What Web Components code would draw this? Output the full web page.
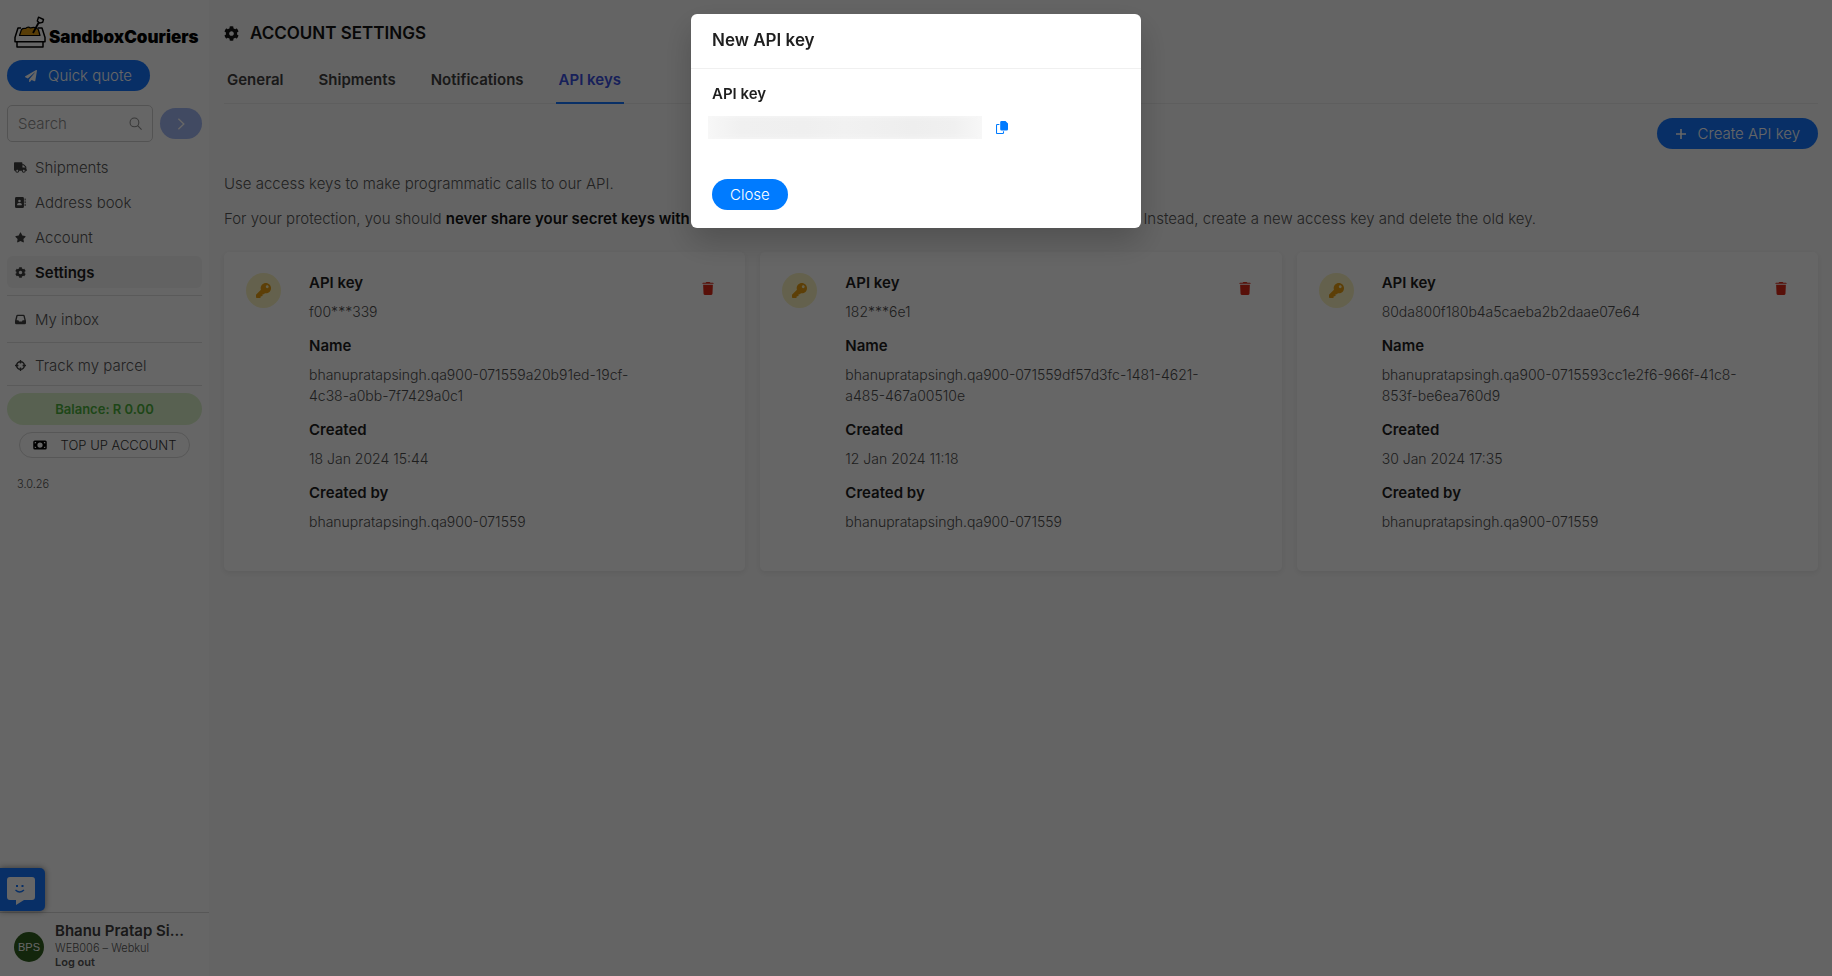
<!DOCTYPE html>
<html lang="en">
<head>
<meta charset="utf-8">
<meta name="viewport" content="width=device-width, initial-scale=1">
<title>Account settings</title>
<style>
  :root {
    --primary: #1677ff;
    --text: #555;
    --strong: #1f1f1f;
    --line: #e2e2e2;
  }
  body {
    margin: 0;
    background: #fafafa;
    color: var(--text);
    font: 300 15px/21px Inter, "Open Sans", sans-serif;
  }
  app-modal {
    --primary: #007bff;
  }
</style>
</head>
<body>
<app-shell>
  <side-bar slot="side"></side-bar>
  <account-settings></account-settings>
</app-shell>
<chat-launcher></chat-launcher>
<app-modal heading="New API key">
  <new-key></new-key>
  <app-button slot="footer">Close</app-button>
</app-modal>

<script>
const ICONS = {
  plane: ['0 0 512 512', '<path d="M476 3.2L12.5 270.6c-18.1 10.4-15.8 35.6 2.2 43.2L121 358.4l287.3-253.2c5.5-4.9 13.3 2.6 8.6 8.3L176 407v80.5c0 23.6 28.5 32.9 42.5 15.8L282 426l124.6 52.2c14.2 6 30.4-2.9 33-18.2l72-432C515 7.8 493.3-6.8 476 3.2z"/>'],
  search: ['0 0 16 16', '<g fill="none" stroke="currentColor" stroke-width="1.3"><circle cx="6.7" cy="6.7" r="5.4"/><path d="M10.6 10.6L15.5 15.5"/></g>'],
  right: ['0 0 16 16', '<path d="M5 2l6.2 6L5 14" fill="none" stroke="currentColor" stroke-width="1.6"/>'],
  truck: ['0 0 640 512', '<path d="M624 352h-16V243.9c0-12.7-5.1-24.9-14.1-33.9L494 110.1c-9-9-21.2-14.1-33.9-14.1H416V48c0-26.5-21.5-48-48-48H48C21.5 0 0 21.5 0 48v320c0 26.5 21.5 48 48 48h16c0 53 43 96 96 96s96-43 96-96h128c0 53 43 96 96 96s96-43 96-96h48c8.8 0 16-7.2 16-16v-32c0-8.8-7.2-16-16-16zM160 464c-26.5 0-48-21.5-48-48s21.5-48 48-48 48 21.5 48 48-21.5 48-48 48zm320 0c-26.5 0-48-21.5-48-48s21.5-48 48-48 48 21.5 48 48-21.5 48-48 48zm80-208H416V144h44.1l99.9 99.9V256z"/>'],
  book: ['0 0 512 512', '<path fill-rule="evenodd" d="M64 0h288a64 64 0 0 1 64 64v384a64 64 0 0 1-64 64H64a64 64 0 0 1-64-64V64A64 64 0 0 1 64 0zM208 128a60 60 0 1 0 0 120 60 60 0 1 0 0-120zM176 284a80 80 0 0 0-80 80c0 10 6 16 16 16h192c10 0 16-6 16-16a80 80 0 0 0-80-80z"/><path d="M448 64h32a16 16 0 0 1 16 16v64a16 16 0 0 1-16 16h-32zM448 192h32a16 16 0 0 1 16 16v64a16 16 0 0 1-16 16h-32zM448 320h32a16 16 0 0 1 16 16v64a16 16 0 0 1-16 16h-32z"/>'],
  star: ['0 0 576 512', '<path d="M259.3 17.8L194 150.2 47.9 171.5c-26.2 3.8-36.7 36.1-17.7 54.6l105.7 103-25 145.5c-4.5 26.3 23.2 46 46.4 33.7L288 439.6l130.7 68.7c23.2 12.2 50.9-7.4 46.4-33.7l-25-145.5 105.7-103c19-18.5 8.5-50.8-17.7-54.6L382 150.2 316.7 17.8c-11.7-23.6-45.6-23.9-57.4 0z"/>'],
  gear: ['0 0 512 512', '<path d="M487.4 315.7l-42.6-24.6c4.3-23.2 4.3-47 0-70.2l42.6-24.6c4.9-2.8 7.1-8.6 5.5-14-11.1-35.6-30-67.8-54.7-94.6-3.8-4.1-10-5.1-14.8-2.3L380.8 110c-17.9-15.4-38.5-27.3-60.8-35.1V25.8c0-5.6-3.9-10.5-9.4-11.7-36.7-8.2-74.3-7.8-109.2 0-5.5 1.2-9.4 6.1-9.4 11.7V75c-22.2 7.9-42.8 19.8-60.8 35.1L88.7 85.5c-4.9-2.8-11-1.9-14.8 2.3-24.7 26.7-43.6 58.9-54.7 94.6-1.7 5.4.6 11.2 5.5 14L67.3 221c-4.3 23.2-4.3 47 0 70.2l-42.6 24.6c-4.9 2.8-7.1 8.6-5.5 14 11.1 35.6 30 67.8 54.7 94.6 3.8 4.1 10 5.1 14.8 2.3l42.6-24.6c17.9 15.4 38.5 27.3 60.8 35.1v49.2c0 5.6 3.9 10.5 9.4 11.7 36.7 8.2 74.3 7.8 109.2 0 5.5-1.2 9.4-6.1 9.4-11.7v-49.2c22.2-7.9 42.8-19.8 60.8-35.1l42.6 24.6c4.9 2.8 11 1.9 14.8-2.3 24.7-26.7 43.6-58.9 54.7-94.6 1.5-5.5-.7-11.3-5.6-14.1zM256 336c-44.1 0-80-35.9-80-80s35.9-80 80-80 80 35.9 80 80-35.9 80-80 80z"/>'],
  inbox: ['0 0 512 512', '<path fill-rule="evenodd" d="M121 32h270a64 64 0 0 1 62 48l57 229q2 8 2 16v91a64 64 0 0 1-64 64H64a64 64 0 0 1-64-64v-91q0-8 2-16L59 80a64 64 0 0 1 62-48zm0 64L73 288h84l32 64h134l32-64h84L391 96z"/>'],
  target: ['0 0 16 16', '<circle cx="8" cy="8" r="5.6" fill="none" stroke="currentColor" stroke-width="2.2"/><path d="M7 0h2v5H7zM7 11h2v5H7zM0 7h5v2H0zM11 7h5v2h-5z"/>'],
  money: ['0 0 576 512', '<path fill-rule="evenodd" d="M64 64h448a64 64 0 0 1 64 64v256a64 64 0 0 1-64 64H64a64 64 0 0 1-64-64V128a64 64 0 0 1 64-64zM288 144a112 112 0 1 0 0 224 112 112 0 1 0 0-224zM64 128v64a64 64 0 0 0 64-64zM448 128a64 64 0 0 0 64 64v-64zM64 320v64h64a64 64 0 0 0-64-64zM512 320a64 64 0 0 0-64 64h64z"/>'],
  plus: ['0 0 12 12', '<path d="M5.2 1h1.6v4.2H11v1.6H6.8V11H5.2V6.8H1V5.2h4.2z"/>'],
  key: ['0 0 512 512', '<path d="M512 176.001C512 273.203 433.202 352 336 352c-11.22 0-22.19-1.062-32.827-3.069l-24.012 27.014A23.999 23.999 0 0 1 261.223 384H224v40c0 13.255-10.745 24-24 24h-40v40c0 13.255-10.745 24-24 24H24c-13.255 0-24-10.745-24-24v-78.059c0-6.365 2.529-12.47 7.029-16.971l161.802-161.802C163.108 213.814 160 195.271 160 176 160 78.798 238.797.001 335.999 0 433.488-.001 512 78.511 512 176.001zM336 128c0 26.51 21.49 48 48 48s48-21.49 48-48-21.49-48-48-48-48 21.49-48 48z"/>'],
  trash: ['0 0 448 512', '<path d="M135 18L128 32H32a32 32 0 0 0-32 32h448a32 32 0 0 0-32-32h-96l-7-14A32 32 0 0 0 284 0H164a32 32 0 0 0-29 18zM416 104H32l16 363a48 48 0 0 0 48 45h256a48 48 0 0 0 48-45z"/>'],
  copy: ['0 0 12 13', '<path d="M5.5 0h4L12 2.5v5.7a1.3 1.3 0 0 1-1.3 1.3H5.5a1.3 1.3 0 0 1-1.3-1.3V1.3A1.3 1.3 0 0 1 5.5 0z"/><path d="M3.4 3.5H1.3a.8.8 0 0 0-.8.8v7.4c0 .4.4.8.8.8h5.4c.4 0 .8-.4.8-.8v-1.4" fill="none" stroke="currentColor" stroke-width="1.1"/>']
};

class AppIcon extends HTMLElement {
  constructor() {
    super();
    this.attachShadow({ mode: 'open' });
  }

  connectedCallback() {
    const [box, shape] = ICONS[this.getAttribute('name')];
    this.shadowRoot.innerHTML = `
      <style>
        :host {
          display: inline-flex;
          flex: none;
          width: var(--icon-width, 12px);
          height: var(--icon-height, 12px);
        }
        svg {
          width: 100%;
          height: 100%;
          fill: currentColor;
        }
      </style>
      <svg viewBox="${box}" aria-hidden="true">${shape}</svg>
    `;
  }
}
customElements.define('app-icon', AppIcon);

class AppButton extends HTMLElement {
  constructor() {
    super();
    this.attachShadow({ mode: 'open' });
  }

  connectedCallback() {
    const icon = this.getAttribute('icon');
    this.shadowRoot.innerHTML = `
      <style>
        :host {
          display: inline-block;
        }
        button {
          display: flex;
          align-items: center;
          gap: 11px;
          height: 31px;
          padding: 0 18px;
          border: 0;
          border-radius: 16px;
          background: var(--primary);
          color: #fff;
          font: inherit;
          cursor: pointer;
        }
      </style>
      <button type="button">
        ${icon ? `<app-icon name="${icon}"></app-icon>` : ''}
        <slot></slot>
      </button>
    `;
  }
}
customElements.define('app-button', AppButton);

class AppShell extends HTMLElement {
  constructor() {
    super();
    this.attachShadow({ mode: 'open' });
  }

  connectedCallback() {
    this.shadowRoot.innerHTML = `
      <style>
        :host {
          display: grid;
          grid-template-columns: 209px 1fr;
          min-height: 100vh;
        }
        main {
          min-width: 0;
          padding: 21px 14px 14px 15px;
        }
      </style>
      <slot name="side"></slot>
      <main><slot></slot></main>
    `;
  }
}
customElements.define('app-shell', AppShell);

class BrandLogo extends HTMLElement {
  constructor() {
    super();
    this.attachShadow({ mode: 'open' });
  }

  connectedCallback() {
    this.shadowRoot.innerHTML = `
      <style>
        :host {
          display: flex;
          align-items: flex-end;
          gap: 3px;
          padding-left: 7px;
          color: #000;
          font-size: 17px;
          font-weight: 900;
          line-height: 22px;
        }
        svg {
          flex: none;
          width: 32px;
          height: 32px;
        }
      </style>
      <svg viewBox="0 0 32 32" fill="none" stroke="#000" stroke-width="1.5" stroke-linejoin="round" aria-hidden="true">
        <path d="M5.5 19.5l2-6q1.500-1.500 4-1 2.500-2.500 5-.5 4-1.500 5.500.5 2 0 2.500 1.500l1.500 5.500z" fill="#dc9a12" stroke-width="1.2"/>
        <path d="M7 12H4L1 21.500v4.200h30v-4.200L28 12h-4.500M3 25.700V31h26v-5.300"/>
        <path d="M19 17l6-11" stroke-width="1.8"/>
        <path d="M24.500 1.200l5 2.300-.8 2.800-3.200.8-2.200-2.100z" stroke-width="1.4"/>
      </svg>
      <span>SandboxCouriers</span>
    `;
  }
}
customElements.define('brand-logo', BrandLogo);

class NavItem extends HTMLElement {
  constructor() {
    super();
    this.attachShadow({ mode: 'open' });
  }

  connectedCallback() {
    this.shadowRoot.innerHTML = `
      <style>
        :host {
          display: block;
        }
        a {
          display: flex;
          align-items: center;
          gap: 8px;
          height: 32px;
          padding: 0 7px;
          border-radius: 6px;
          color: inherit;
          text-decoration: none;
        }
        :host([active]) a {
          background: #f5f5f5;
          color: var(--strong);
          font-weight: 600;
        }
        .icon {
          display: flex;
          justify-content: center;
          width: 13px;
          color: #404040;
        }
        app-icon {
          --icon-width: ${this.getAttribute('icon') === 'truck' ? 13 : 11}px;
          --icon-height: 11px;
        }
      </style>
      <a href="#"><span class="icon"><app-icon name="${this.getAttribute('icon')}"></app-icon></span><slot></slot></a>
    `;
  }
}
customElements.define('nav-item', NavItem);

class SideBar extends HTMLElement {
  constructor() {
    super();
    this.attachShadow({ mode: 'open' });
  }

  connectedCallback() {
    this.shadowRoot.innerHTML = `
      <style>
        * {
          box-sizing: border-box;
        }
        :host {
          display: flex;
          flex-direction: column;
          position: sticky;
          top: 0;
          height: 100vh;
          background: #fff;
        }
        .top {
          flex: 1;
          padding: 16px 7px 0;
        }
        .quote {
          margin-top: 12px;
        }
        .search {
          display: flex;
          align-items: center;
          gap: 7px;
          margin: 14px 0 9px;
        }
        .field {
          display: flex;
          align-items: center;
          flex: 1;
          min-width: 0;
          height: 37px;
          padding: 0 10px;
          border: 1px solid #d0d0d0;
          border-radius: 5px;
          color: #8c8c8c;
          --icon-width: 13px;
          --icon-height: 13px;
        }
        input {
          flex: 1;
          min-width: 0;
          padding: 0;
          border: 0;
          outline: 0;
          background: none;
          font: inherit;
        }
        input::placeholder {
          color: #8c8c8c;
          opacity: 1;
        }
        .go {
          display: flex;
          align-items: center;
          justify-content: center;
          width: 42px;
          height: 31px;
          padding: 0;
          border: 0;
          border-radius: 16px;
          background: #a3b8f5;
          color: #fff;
          --icon-width: 14px;
          --icon-height: 14px;
        }
        nav {
          display: grid;
          gap: 3px;
          padding-bottom: 7px;
        }
        nav + nav {
          padding-top: 7px;
          border-top: 1px solid var(--line);
        }
        nav.last {
          padding: 6px 0 4px;
          border-bottom: 1px solid var(--line);
        }
        .balance {
          margin-top: 7px;
          border-radius: 16px;
          background: #ddf3cb;
          color: #4cb03c;
          font-size: 13px;
          font-weight: 600;
          line-height: 32px;
          text-align: center;
        }
        .topup {
          display: flex;
          align-items: center;
          justify-content: center;
          gap: 14px;
          width: 171px;
          height: 26px;
          margin: 7px auto 0;
          padding: 0;
          border: 1px solid #d9d9d9;
          border-radius: 13px;
          background: none;
          color: #333;
          font: inherit;
          font-size: 13px;
          --icon-width: 14px;
        }
        .topup app-icon {
          color: #000;
        }
        .version {
          margin: 16px 10px;
          font-size: 11px;
        }
        .user {
          display: flex;
          align-items: center;
          gap: 11px;
          height: 64px;
          padding: 0 14px;
          border-top: 1px solid #d9d9d9;
        }
        .avatar {
          display: grid;
          place-items: center;
          flex: none;
          width: 30px;
          height: 30px;
          margin-top: 4px;
          border-radius: 50%;
          background: #315f1f;
          color: #fff;
          font: 11px/30px "Liberation Sans", sans-serif;
        }
        .who {
          display: grid;
          min-width: 0;
          font-size: 11px;
          line-height: 14px;
        }
        .who strong {
          overflow: hidden;
          color: #404040;
          font-size: 15px;
          font-weight: 600;
          line-height: 20px;
          text-overflow: ellipsis;
          white-space: nowrap;
        }
        .who a {
          color: inherit;
          font-weight: 600;
          text-decoration: none;
        }
      </style>
      <div class="top">
        <brand-logo></brand-logo>
        <app-button class="quote" icon="plane">Quick quote</app-button>
        <form class="search">
          <label class="field"><input type="text" placeholder="Search" aria-label="Search"><app-icon name="search"></app-icon></label>
          <button class="go" type="button" aria-label="Go"><app-icon name="right"></app-icon></button>
        </form>
        <nav>
          <nav-item icon="truck">Shipments</nav-item>
          <nav-item icon="book">Address book</nav-item>
          <nav-item icon="star">Account</nav-item>
          <nav-item icon="gear" active>Settings</nav-item>
        </nav>
        <nav><nav-item icon="inbox">My inbox</nav-item></nav>
        <nav class="last"><nav-item icon="target">Track my parcel</nav-item></nav>
        <div class="balance">Balance: R 0.00</div>
        <button class="topup" type="button"><app-icon name="money"></app-icon>TOP UP ACCOUNT</button>
        <div class="version">3.0.26</div>
      </div>
      <div class="user">
        <span class="avatar">BPS</span>
        <div class="who">
          <strong>Bhanu Pratap Si...</strong>
          <span>WEB006 – Webkul</span>
          <a href="#">Log out</a>
        </div>
      </div>
    `;
  }
}
customElements.define('side-bar', SideBar);

class KeyCard extends HTMLElement {
  constructor() {
    super();
    this.attachShadow({ mode: 'open' });
  }

  connectedCallback() {
    const get = (name) => this.getAttribute(name);
    this.shadowRoot.innerHTML = `
      <style>
        :host {
          display: grid;
          grid-template-columns: 35px minmax(0, 1fr) 12px;
          padding: 20px 31px 39px 22px;
          border-radius: 5px;
          background: #fff;
          box-shadow: 0 2px 6px rgba(0, 0, 0, 0.08);
          line-height: 21px;
        }
        .badge {
          display: grid;
          place-items: center;
          width: 35px;
          height: 35px;
          margin-top: 1px;
          border-radius: 50%;
          background: #faf3c0;
          color: #e89f12;
          --icon-width: 15px;
          --icon-height: 15px;
        }
        dl {
          display: grid;
          align-content: start;
          gap: 13px;
          margin: 0 20px 0 28px;
        }
        dt {
          margin-bottom: 8px;
          color: var(--strong);
          font-weight: 600;
        }
        dd {
          margin: 0;
          color: #4d4d4d;
          font-size: 14px;
          white-space: pre-line;
        }
        button {
          align-self: start;
          display: flex;
          margin-top: 10px;
          padding: 0;
          border: 0;
          background: none;
          color: #dc2a18;
          --icon-height: 13px;
        }
      </style>
      <span class="badge"><app-icon name="key"></app-icon></span>
      <dl>
        <div><dt>API key</dt><dd>${get('key')}</dd></div>
        <div><dt>Name</dt><dd>${get('name')}</dd></div>
        <div><dt>Created</dt><dd>${get('created')}</dd></div>
        <div><dt>Created by</dt><dd>${get('by')}</dd></div>
      </dl>
      <button type="button" aria-label="Delete"><app-icon name="trash"></app-icon></button>
    `;
  }
}
customElements.define('key-card', KeyCard);

class AccountSettings extends HTMLElement {
  constructor() {
    super();
    this.attachShadow({ mode: 'open' });
  }

  connectedCallback() {
    this.shadowRoot.innerHTML = `
      <style>
        :host {
          display: block;
        }
        h1 {
          display: flex;
          align-items: center;
          gap: 11px;
          margin: 0;
          color: #141414;
          font-size: 17px;
          font-weight: 600;
          line-height: 24px;
          --icon-width: 15px;
          --icon-height: 15px;
        }
        nav {
          display: flex;
          gap: 29px;
          margin-top: 24px;
          border-bottom: 1px solid #ebebeb;
        }
        nav a {
          margin-bottom: -1px;
          padding: 0 3px 12px;
          border-bottom: 2px solid transparent;
          color: #404040;
          font-weight: 600;
          text-decoration: none;
        }
        nav a[aria-current] {
          border-color: var(--primary);
          color: #3b50e0;
        }
        .actions {
          display: flex;
          justify-content: flex-end;
          margin: 14px 0 24px;
        }
        p {
          margin: 0 0 14px;
        }
        b {
          color: #141414;
          font-weight: 600;
        }
        .cards {
          display: grid;
          grid-template-columns: repeat(3, minmax(0, 1fr));
          gap: 15px;
          margin-top: 23px;
        }
      </style>
      <h1><app-icon name="gear"></app-icon>ACCOUNT SETTINGS</h1>
      <nav>
        <a href="#">General</a>
        <a href="#">Shipments</a>
        <a href="#">Notifications</a>
        <a href="#" aria-current="page">API keys</a>
      </nav>
      <div class="actions"><app-button icon="plus">Create API key</app-button></div>
      <p>Use access keys to make programmatic calls to our API.</p>
      <p>For your protection, you should <b>never share your secret keys with anyone.</b> If you lose or forget the secret key, you can't retrieve it. Instead, create a new access key and delete the old key.</p>
      <div class="cards">
        <key-card key="f00***339" name="bhanupratapsingh.qa900-071559a20b91ed-19cf-&#10;4c38-a0bb-7f7429a0c1" created="18 Jan 2024 15:44" by="bhanupratapsingh.qa900-071559"></key-card>
        <key-card key="182***6e1" name="bhanupratapsingh.qa900-071559df57d3fc-1481-4621-&#10;a485-467a00510e" created="12 Jan 2024 11:18" by="bhanupratapsingh.qa900-071559"></key-card>
        <key-card key="80da800f180b4a5caeba2b2daae07e64" name="bhanupratapsingh.qa900-0715593cc1e2f6-966f-41c8-&#10;853f-be6ea760d9" created="30 Jan 2024 17:35" by="bhanupratapsingh.qa900-071559"></key-card>
      </div>
    `;
  }
}
customElements.define('account-settings', AccountSettings);

class ChatLauncher extends HTMLElement {
  constructor() {
    super();
    this.attachShadow({ mode: 'open' });
  }

  connectedCallback() {
    this.shadowRoot.innerHTML = `
      <style>
        :host {
          position: fixed;
          bottom: 65px;
          left: 0;
        }
        button {
          display: flex;
          align-items: center;
          width: 45px;
          height: 43px;
          padding: 2px 0 0 7px;
          border: 0;
          border-radius: 0 5px 5px 0;
          background: var(--primary);
          box-shadow: 0 0 6px rgba(0, 0, 0, 0.5);
        }
        svg {
          width: 28px;
          height: 28px;
        }
      </style>
      <button type="button" aria-label="Chat">
        <svg viewBox="0 0 28 28" aria-hidden="true">
          <path d="M3 0h22a3 3 0 0 1 3 3v17a3 3 0 0 1-3 3h-8l-8 5v-5H3a3 3 0 0 1-3-3V3a3 3 0 0 1 3-3z" fill="#fff"/>
          <path d="M9 8h2v2H9zM14.5 8h2v2h-2z" fill="#1677ff"/>
          <path d="M8.5 13q4 4 8.500 0" fill="none" stroke="#1677ff" stroke-width="1.3"/>
        </svg>
      </button>
    `;
  }
}
customElements.define('chat-launcher', ChatLauncher);

class NewKey extends HTMLElement {
  constructor() {
    super();
    this.attachShadow({ mode: 'open' });
  }

  connectedCallback() {
    this.shadowRoot.innerHTML = `
      <style>
        :host {
          display: block;
        }
        h3 {
          margin: 0 0 12px;
          color: var(--strong);
          font-size: 15px;
          font-weight: 600;
          line-height: 21px;
        }
        .row {
          display: flex;
          align-items: center;
          gap: 14px;
          margin-left: -4px;
        }
        .secret {
          width: 274px;
          height: 23px;
          background: linear-gradient(90deg, #f7f7f7, #f0f0f0 12%, #efefef 35%, #f1f1f1 50%, #eee 75%, #f0f0f0 90%, #f7f7f7);
          box-shadow: inset 0 0 6px #f7f7f7;
        }
        button {
          display: flex;
          padding: 0;
          border: 0;
          background: none;
          color: var(--primary);
          --icon-width: 12px;
          --icon-height: 13px;
        }
      </style>
      <h3>API key</h3>
      <div class="row">
        <div class="secret"></div>
        <button type="button" aria-label="Copy"><app-icon name="copy"></app-icon></button>
      </div>
    `;
  }
}
customElements.define('new-key', NewKey);

class AppModal extends HTMLElement {
  constructor() {
    super();
    this.attachShadow({ mode: 'open' });
  }

  connectedCallback() {
    this.shadowRoot.innerHTML = `
      <style>
        :host {
          position: fixed;
          inset: 0;
          display: flex;
          align-items: flex-start;
          justify-content: center;
          padding-top: 14px;
          background: rgba(0, 0, 0, 0.6);
        }
        section {
          width: 450px;
          border-radius: 6px;
          background: #fff;
          box-shadow: 0 14px 32px rgba(0, 0, 0, 0.2);
        }
        h2 {
          margin: 0;
          padding: 14px 21px 16px;
          border-bottom: 1px solid #f0f0f0;
          color: var(--strong);
          font-size: 17px;
          font-weight: 600;
          line-height: 24px;
        }
        .body {
          padding: 14px 21px 40px;
        }
        footer {
          display: flex;
          padding: 0 21px 18px;
        }
      </style>
      <section role="dialog" aria-modal="true" aria-labelledby="title">
        <h2 id="title">${this.getAttribute('heading')}</h2>
        <div class="body"><slot></slot></div>
        <footer><slot name="footer"></slot></footer>
      </section>
    `;
  }
}
customElements.define('app-modal', AppModal);
</script>
</body>
</html>
